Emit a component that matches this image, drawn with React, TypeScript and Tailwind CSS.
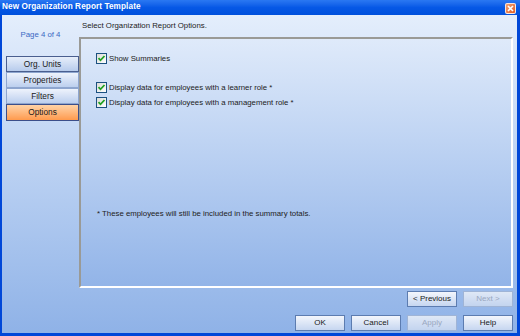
import React from "react";

const font = { fontFamily: '"Liberation Sans", Arial, sans-serif' };

function Check() {
  return (
    <span className="inline-flex w-[11px] h-[11px] border border-[#1c5180] bg-gradient-to-br from-[#dcdcd7] to-[#ffffff] items-center justify-center shrink-0">
      <svg width="9" height="9" viewBox="0 0 9 9">
        <path d="M1.5 4.2 L3.5 6.3 L7.5 2" stroke="#21a121" strokeWidth="1.8" fill="none" />
      </svg>
    </span>
  );
}

function Btn({ label, disabled }: { label: string; disabled?: boolean }) {
  return (
    <div
      className={
        "w-[50px] h-[16px] flex items-center justify-center border text-[8px] leading-none bg-gradient-to-b " +
        (disabled
          ? "border-[#9fb4d6] from-[#dfe8f6] to-[#c3d4ef] text-[#9aa8c0]"
          : "border-[#5c7cb0] from-[#f3f6fc] to-[#c6d6f0] text-[#1a1a1a]")
      }
    >
      {label}
    </div>
  );
}

function Nav({ label, variant, h }: { label: string; variant?: "focus" | "active"; h: string }) {
  const cls =
    variant === "active"
      ? "border-[#3c4f8a] from-[#ffd3a6] to-[#ff9a4c]"
      : variant === "focus"
      ? "border-[#4a5f8f] from-[#e7eefa] to-[#b7cbec]"
      : "border-[#8ea6cf] from-[#eef3fc] to-[#bccfee]";
  return (
    <div className={h + " flex items-center justify-center border text-[8.3px] leading-none text-[#1a1a1a] bg-gradient-to-b " + cls}>
      {label}
    </div>
  );
}

export default function App() {
  return (
    <div className="w-[520px] h-[336px] flex flex-col bg-[#0047d8]" style={font}>
      <div className="h-[15px] flex items-center justify-between bg-gradient-to-b from-[#2a78f2] via-[#0658e6] to-[#0050dc] pl-[2px] pr-[4px]">
        <span className="text-white font-bold text-[8.2px] leading-none tracking-[0.1px]">
          New Organization Report Template
        </span>
        <span className="w-[11px] h-[11px] mt-[1px] rounded-[2px] border border-white/80 bg-gradient-to-br from-[#f0a070] to-[#e05a20] flex items-center justify-center">
          <svg width="7" height="7" viewBox="0 0 7 7">
            <path d="M1 1 L6 6 M6 1 L1 6" stroke="white" strokeWidth="1.6" />
          </svg>
        </span>
      </div>
      <div className="flex-1 ml-[2px] mr-[3px] mb-[3px] flex bg-gradient-to-b from-[#e4eefc] to-[#8fb2e7] text-[#222]">
        <div className="w-[77px] flex flex-col pl-[4px]">
          <div className="pt-[16px] h-[41px] text-[7.8px] leading-none text-[#3a69c4] text-center pr-[4px]">Page 4 of 4</div>
          <div className="flex flex-col">
            <Nav label="Org. Units" variant="focus" h="h-[16px]" />
            <Nav label="Properties" h="h-[16px]" />
            <Nav label="Filters" h="h-[16px]" />
            <Nav label="Options" variant="active" h="h-[17px]" />
          </div>
        </div>
        <div className="flex-1 flex flex-col pr-[4px]">
          <div className="h-[22px] pl-[3px] pt-[7px] text-[7.8px] leading-none">Select Organization Report Options.</div>
          <div className="h-[251px] border-t-2 border-l-2 border-t-[#9a9a96] border-l-[#9a9a96] border-b-2 border-r-2 border-b-white border-r-white bg-gradient-to-b from-[#dfeafa] to-[#92b4e8] pl-[15px] pt-[14px] text-[7.8px] leading-none">
            <div className="flex items-center gap-[2px] h-[11px]">
              <Check />
              <span>Show Summaries</span>
            </div>
            <div className="flex items-center gap-[2px] h-[11px] mt-[18px]">
              <Check />
              <span>Display data for employees with a learner role *</span>
            </div>
            <div className="flex items-center gap-[2px] h-[11px] mt-[4px]">
              <Check />
              <span>Display data for employees with a management role *</span>
            </div>
            <div className="mt-[102px] pl-[1px]">* These employees will still be included in the summary totals.</div>
          </div>
          <div className="flex justify-end gap-[6px] mt-[3px]">
            <Btn label="< Previous" />
            <Btn label="Next >" disabled />
          </div>
          <div className="flex justify-end gap-[6px] mt-[8px]">
            <Btn label="OK" />
            <Btn label="Cancel" />
            <Btn label="Apply" disabled />
            <Btn label="Help" />
          </div>
        </div>
      </div>
    </div>
  );
}
